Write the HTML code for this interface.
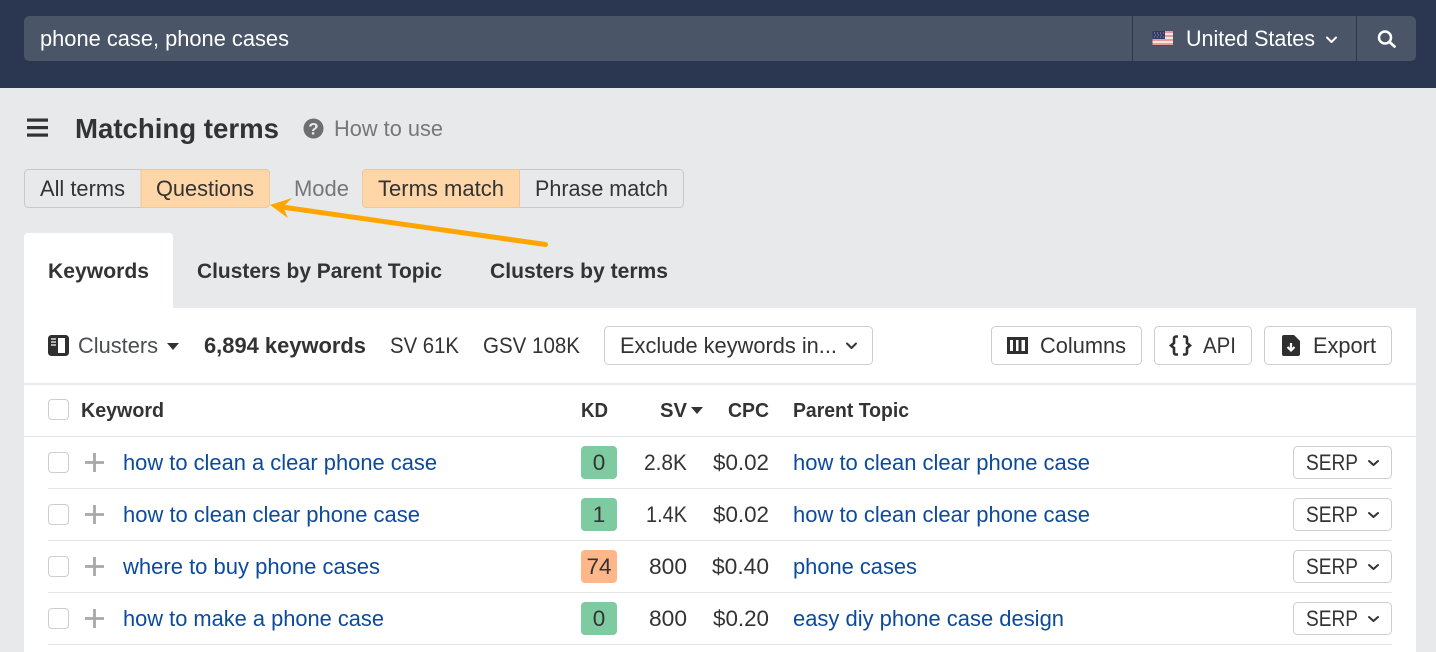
<!DOCTYPE html>
<html lang="en"><head><meta charset="utf-8"><title>Matching terms</title>
<style>
html,body{margin:0;padding:0;background:#e8e9eb;width:1436px;height:652px;overflow:hidden}
svg{display:block}
text{font-family:"Liberation Sans",sans-serif;font-size:22.5px;fill:#333;}
.b{font-weight:700}
.h{font-size:20.5px;font-weight:700}
.l{fill:#0c4a9c}
.w{fill:#fff}
.g{fill:#757779}
.bt{fill:#fff;stroke:#ccced1;stroke-width:1}
.cb{fill:#fff;stroke:#ccced1;stroke-width:1}
.ch{fill:none;stroke:#333;stroke-width:2;stroke-linecap:round;stroke-linejoin:round}
.pl{stroke:#a8a8a8;stroke-width:2.800;fill:none}
</style></head><body>
<svg width="1436" height="652" viewBox="0 0 1436 652" xmlns="http://www.w3.org/2000/svg">
<rect width="1436" height="652" fill="#e8e9eb"/>
<!-- header -->
<rect width="1436" height="88" fill="#2b3650"/>
<rect x="24" y="16" width="1392" height="45" rx="5" fill="#4a5568"/>
<rect x="1132" y="16" width="1" height="45" fill="#2b3650"/>
<rect x="1356" y="16" width="1" height="45" fill="#2b3650"/>
<text class="w" x="40" y="46" textLength="249" lengthAdjust="spacingAndGlyphs">phone case, phone cases</text>
<g>
<rect x="1152.500" y="31" width="20.500" height="15" fill="#e59a9e"/>
<rect x="1152.500" y="33" width="20.500" height="2" fill="#f4e4e4"/><rect x="1152.500" y="37" width="20.500" height="2" fill="#f4e4e4"/><rect x="1152.500" y="41" width="20.500" height="2" fill="#f4e4e4"/>
<rect x="1152.500" y="45" width="20.500" height="1" fill="#8e2f3c"/>
<rect x="1152.500" y="31" width="12.500" height="8" fill="#2f3a66"/>
<path d="M1154 33h1M1157 33h1M1160 33h1M1163 33h1M1155 35h1M1158 35h1M1161 35h1M1154 37h1M1157 37h1M1160 37h1M1163 37h1" stroke="#99a0bb" stroke-width="1"/>
</g>
<text class="w" x="1186" y="46" textLength="129" lengthAdjust="spacingAndGlyphs">United States</text>
<path d="M1327 37.500l4.500 4.500 4.500-4.500" fill="none" stroke="#fff" stroke-width="2" stroke-linecap="round" stroke-linejoin="round"/>
<circle cx="1385" cy="37.500" r="6" fill="none" stroke="#fff" stroke-width="2.500"/>
<path d="M1389.500 42l5 4.500" stroke="#fff" stroke-width="2.800" stroke-linecap="round"/>
<!-- title row -->
<rect x="27" y="118.500" width="21" height="3.200" fill="#333"/><rect x="27" y="126" width="21" height="3.200" fill="#333"/><rect x="27" y="133.500" width="21" height="3.200" fill="#333"/>
<text class="b" style="font-size:28px" x="75" y="138" textLength="204" lengthAdjust="spacingAndGlyphs">Matching terms</text>
<circle cx="313.500" cy="128.500" r="10" fill="#6e6e6e"/>
<text x="313.500" y="134.500" text-anchor="middle" style="font-size:17px;font-weight:700;fill:#e8e9eb">?</text>
<text class="g" x="334" y="136" textLength="109" lengthAdjust="spacingAndGlyphs">How to use</text>
<!-- segmented -->
<rect x="24.500" y="169.500" width="245" height="38" rx="4" fill="#e8e9eb" stroke="#c6c8cb"/>
<path d="M141 169.500h124.500a4 4 0 0 1 4 4v30a4 4 0 0 1-4 4H141z" fill="#ffd6a8" stroke="#f0c795"/>
<text x="40" y="196" textLength="85" lengthAdjust="spacingAndGlyphs">All terms</text>
<text x="156" y="196" textLength="98" lengthAdjust="spacingAndGlyphs">Questions</text>
<text class="g" x="294" y="196" textLength="55" lengthAdjust="spacingAndGlyphs">Mode</text>
<rect x="362.500" y="169.500" width="321" height="38" rx="4" fill="#e8e9eb" stroke="#c6c8cb"/>
<path d="M519.500 169.500H366.500a4 4 0 0 0-4 4v30a4 4 0 0 0 4 4h153z" fill="#ffd6a8" stroke="#f0c795"/>
<text x="378" y="196" textLength="126" lengthAdjust="spacingAndGlyphs">Terms match</text>
<text x="535" y="196" textLength="133" lengthAdjust="spacingAndGlyphs">Phrase match</text>
<!-- tabs -->
<path d="M24 308V237a4 4 0 0 1 4-4h141a4 4 0 0 1 4 4v71z" fill="#fff"/>
<rect x="24" y="308" width="1392" height="344" fill="#fff"/>
<text class="h" style="font-size:21px" x="48" y="278" textLength="101" lengthAdjust="spacingAndGlyphs">Keywords</text>
<text class="h" style="font-size:21px" x="197" y="278" textLength="245" lengthAdjust="spacingAndGlyphs">Clusters by Parent Topic</text>
<text class="h" style="font-size:21px" x="490" y="278" textLength="178" lengthAdjust="spacingAndGlyphs">Clusters by terms</text>
<!-- arrow -->
<path d="M545.500 244.500L282 207" stroke="#ffa500" stroke-width="5" stroke-linecap="round" fill="none"/>
<path d="M270 205L292 198L283 207L288 218z" fill="#ffa500"/>
<!-- toolbar -->
<rect x="48" y="335" width="21" height="21" rx="3.500" fill="#2f2f2f"/>
<rect x="58" y="338" width="7" height="15" fill="#fff"/>
<path d="M51 339h5M51 342h5M51 345h5" stroke="#fff" stroke-width="1.200"/>
<text class="g" style="fill:#4b4d50" x="78" y="353" textLength="80" lengthAdjust="spacingAndGlyphs">Clusters</text>
<path d="M167 343h12l-6 7z" fill="#333"/>
<text class="b" x="204" y="353" textLength="162" lengthAdjust="spacingAndGlyphs">6,894 keywords</text>
<text x="390" y="353" textLength="69" lengthAdjust="spacingAndGlyphs">SV 61K</text>
<text x="483" y="353" textLength="97" lengthAdjust="spacingAndGlyphs">GSV 108K</text>
<rect class="bt" x="604.500" y="326.500" width="268" height="38" rx="4"/>
<text x="620" y="353" textLength="217" lengthAdjust="spacingAndGlyphs">Exclude keywords in...</text>
<path class="ch" d="M847 343.500l4.500 4.500 4.500-4.500"/>
<rect class="bt" x="991.500" y="326.500" width="150" height="38" rx="4"/>
<rect x="1008.500" y="338.500" width="18" height="14" fill="none" stroke="#2f2f2f" stroke-width="3"/>
<rect x="1013" y="338" width="3" height="15" fill="#2f2f2f"/><rect x="1018.500" y="338" width="3" height="15" fill="#2f2f2f"/>
<text x="1040" y="353" textLength="86" lengthAdjust="spacingAndGlyphs">Columns</text>
<rect class="bt" x="1154.500" y="326.500" width="97" height="38" rx="4"/>
<path d="M1178 336.500h-2a2 2 0 0 0-2 2v4.500l-3 2.500 3 2.500v4.500a2 2 0 0 0 2 2h2M1183 336.500h2a2 2 0 0 1 2 2v4.500l3 2.500-3 2.500v4.500a2 2 0 0 1-2 2h-2" fill="none" stroke="#2f2f2f" stroke-width="2.600"/>
<text x="1203" y="353" textLength="33" lengthAdjust="spacingAndGlyphs">API</text>
<rect class="bt" x="1264.500" y="326.500" width="127" height="38" rx="4"/>
<path d="M1284 335h10l6 6v13a2 2 0 0 1-2 2h-14a2 2 0 0 1-2-2v-17a2 2 0 0 1 2-2z" fill="#2f2f2f"/>
<path d="M1291 343v7M1287.500 347l3.500 3.500 3.500-3.500" fill="none" stroke="#fff" stroke-width="2.200"/>
<text x="1313" y="353" textLength="63" lengthAdjust="spacingAndGlyphs">Export</text>
<rect x="24" y="383" width="1392" height="2" fill="#e8e9eb"/>
<!-- table head -->
<rect class="cb" x="48.500" y="399.500" width="20" height="20" rx="3.500"/>
<text class="h" x="81" y="417" textLength="83" lengthAdjust="spacingAndGlyphs">Keyword</text>
<text class="h" x="581" y="417" textLength="27" lengthAdjust="spacingAndGlyphs">KD</text>
<text class="h" x="660" y="417" textLength="27" lengthAdjust="spacingAndGlyphs">SV</text>
<path d="M691 407h12l-6 7z" fill="#333"/>
<text class="h" x="728" y="417" textLength="41" lengthAdjust="spacingAndGlyphs">CPC</text>
<text class="h" x="793" y="417" textLength="116" lengthAdjust="spacingAndGlyphs">Parent Topic</text>
<rect x="24" y="436" width="1392" height="1" fill="#e3e4e6"/>
<!-- row 1 -->
<rect class="cb" x="48.500" y="452.500" width="20" height="20" rx="3.500"/>
<path class="pl" d="M85 462.500h19M94.500 453v19"/>
<text class="l" x="123" y="470" textLength="314" lengthAdjust="spacingAndGlyphs">how to clean a clear phone case</text>
<rect x="581" y="446" width="36" height="33" rx="4" fill="#7fcba1"/>
<text x="599" y="470" text-anchor="middle">0</text>
<text x="644" y="470" textLength="43" lengthAdjust="spacingAndGlyphs">2.8K</text>
<text x="713" y="470" textLength="56" lengthAdjust="spacingAndGlyphs">$0.02</text>
<text class="l" x="793" y="470" textLength="297" lengthAdjust="spacingAndGlyphs">how to clean clear phone case</text>
<rect class="bt" x="1293.500" y="446.500" width="98" height="32" rx="4"/>
<text x="1306" y="470" textLength="52" lengthAdjust="spacingAndGlyphs">SERP</text>
<path class="ch" d="M1369 461l4.500 4 4.500-4"/>
<rect x="48" y="488" width="1344" height="1" fill="#e3e4e6"/>
<!-- row 2 -->
<rect class="cb" x="48.500" y="504.500" width="20" height="20" rx="3.500"/>
<path class="pl" d="M85 514.500h19M94.500 505v19"/>
<text class="l" x="123" y="522" textLength="297" lengthAdjust="spacingAndGlyphs">how to clean clear phone case</text>
<rect x="581" y="498" width="36" height="33" rx="4" fill="#7fcba1"/>
<text x="599" y="522" text-anchor="middle">1</text>
<text x="646" y="522" textLength="41" lengthAdjust="spacingAndGlyphs">1.4K</text>
<text x="713" y="522" textLength="56" lengthAdjust="spacingAndGlyphs">$0.02</text>
<text class="l" x="793" y="522" textLength="297" lengthAdjust="spacingAndGlyphs">how to clean clear phone case</text>
<rect class="bt" x="1293.500" y="498.500" width="98" height="32" rx="4"/>
<text x="1306" y="522" textLength="52" lengthAdjust="spacingAndGlyphs">SERP</text>
<path class="ch" d="M1369 513l4.500 4 4.500-4"/>
<rect x="48" y="540" width="1344" height="1" fill="#e3e4e6"/>
<!-- row 3 -->
<rect class="cb" x="48.500" y="556.500" width="20" height="20" rx="3.500"/>
<path class="pl" d="M85 566.500h19M94.500 557v19"/>
<text class="l" x="123" y="574" textLength="257" lengthAdjust="spacingAndGlyphs">where to buy phone cases</text>
<rect x="581" y="550" width="36" height="33" rx="4" fill="#ffb688"/>
<text x="599" y="574" text-anchor="middle">74</text>
<text x="649" y="574" textLength="38" lengthAdjust="spacingAndGlyphs">800</text>
<text x="712" y="574" textLength="57" lengthAdjust="spacingAndGlyphs">$0.40</text>
<text class="l" x="793" y="574" textLength="124" lengthAdjust="spacingAndGlyphs">phone cases</text>
<rect class="bt" x="1293.500" y="550.500" width="98" height="32" rx="4"/>
<text x="1306" y="574" textLength="52" lengthAdjust="spacingAndGlyphs">SERP</text>
<path class="ch" d="M1369 565l4.500 4 4.500-4"/>
<rect x="48" y="592" width="1344" height="1" fill="#e3e4e6"/>
<!-- row 4 -->
<rect class="cb" x="48.500" y="608.500" width="20" height="20" rx="3.500"/>
<path class="pl" d="M85 618.500h19M94.500 609v19"/>
<text class="l" x="123" y="626" textLength="261" lengthAdjust="spacingAndGlyphs">how to make a phone case</text>
<rect x="581" y="602" width="36" height="33" rx="4" fill="#7fcba1"/>
<text x="599" y="626" text-anchor="middle">0</text>
<text x="649" y="626" textLength="38" lengthAdjust="spacingAndGlyphs">800</text>
<text x="713" y="626" textLength="56" lengthAdjust="spacingAndGlyphs">$0.20</text>
<text class="l" x="793" y="626" textLength="271" lengthAdjust="spacingAndGlyphs">easy diy phone case design</text>
<rect class="bt" x="1293.500" y="602.500" width="98" height="32" rx="4"/>
<text x="1306" y="626" textLength="52" lengthAdjust="spacingAndGlyphs">SERP</text>
<path class="ch" d="M1369 617l4.500 4 4.500-4"/>
<rect x="48" y="644" width="1344" height="1" fill="#e3e4e6"/>
</svg>
</body></html>
